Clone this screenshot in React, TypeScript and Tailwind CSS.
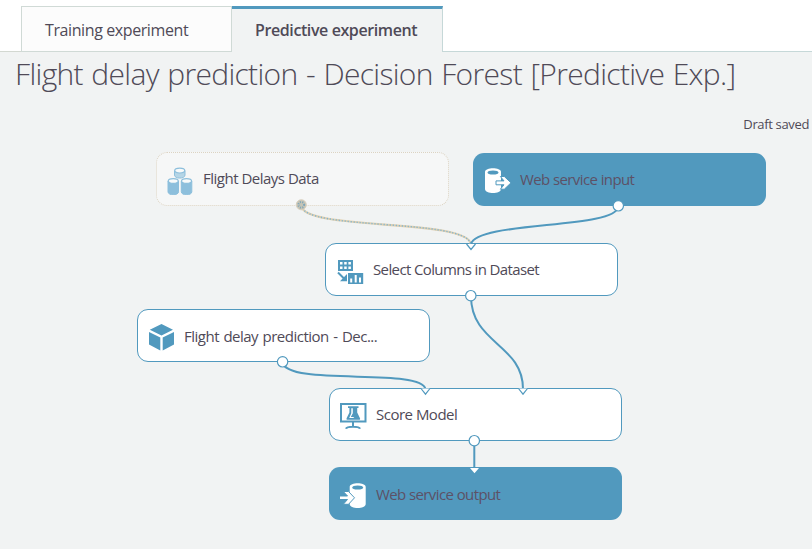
import type { ReactNode } from 'react';

const BLUE = '#5199be';

type NodeProps = {
  box: string;
  label: string;
  labelClass: string;
  icon: ReactNode;
};

function DatasetIcon() {
  const can = (x: number, y: number, h: number, body: string) => (
    <g key={`${x}-${y}`}>
      <path
        d={`M${x + 0.5} ${y + 3}v${h}c0 4 10.5 4 10.5 0v-${h}z`}
        fill={body}
        stroke="#8dbfdc"
      />
      <ellipse cx={x + 5.75} cy={y + 3} rx="5" ry="2.4" fill="#f8fafa" stroke="#8dbfdc" strokeWidth="1.2" />
    </g>
  );
  return (
    <svg className="h-[28px] w-[26px]" viewBox="0 0 26 28">
      {can(7, 0.6, 4.5, '#b5d5e6')}
      {can(0.5, 11, 10.8, '#8dbfdc')}
      {can(13.8, 11, 10.8, '#8dbfdc')}
    </svg>
  );
}

function InputIcon() {
  return (
    <svg className="h-[26px] w-[26px]" viewBox="0 0 26 26">
      <path d="M0 4v17c0 5.300 16 5.300 16 0V4c0-5-16-5-16 0z" fill="#fff" />
      <ellipse cx="8" cy="4.600" rx="5.400" ry="2" fill={BLUE} />
      <path d="M11 12.900h8l-3.600-4.400h3.900l6.700 6.300-6.700 6.400h-3.900l3.600-4.400H11z" fill="#fff" stroke={BLUE} />
    </svg>
  );
}

function OutputIcon() {
  return (
    <svg className="h-[26px] w-[26px]" viewBox="0 0 26 26">
      <path d="M9.700 4v17c0 5.300 16 5.300 16 0V4c0-5-16-5-16 0z" fill="#fff" />
      <ellipse cx="17.700" cy="4.600" rx="5.400" ry="2" fill={BLUE} />
      <path d="M-1 13h8.500L3.300 8.500h5.200l6 6.300-6 6.500H3.300l4.200-4.800H-1z" fill="#fff" stroke={BLUE} />
    </svg>
  );
}

function ColumnsIcon() {
  return (
    <svg className="h-[25px] w-[27px]" viewBox="0 0 27 25">
      <path d="M1 0h15v11H1z" fill={BLUE} />
      <path d="M3 2h2.500v2.500H3zM7.200 2h2.500v2.500H7.200zM11.400 2h2.500v2.500h-2.500zM3 6.500h2.500V9H3zM7.200 6.500h2.500V9H7.200zM11.400 6.500h2.500V9h-2.500z" fill="#fff" />
      <path d="M1 12.500l7 7" stroke={BLUE} strokeWidth="2" />
      <path d="M10 14v7.300H3z" fill={BLUE} />
      <path d="M11 13h15.200v11H11z" fill={BLUE} />
      <path d="M13.200 18.500h2v4h-2zM17.700 15h2v7.500h-2zM22 17.500h2v5h-2z" fill="#fff" />
    </svg>
  );
}

function CubeIcon() {
  return (
    <svg className="h-[27px] w-[25px]" viewBox="0 0 25 27">
      <path d="M12.500 0L24 5.700 12.500 11.500.8 5.700zM0 8l11.300 5.600V26.500L0 20.500zM25 8l-11.300 5.600V26.500L25 20.500z" fill={BLUE} />
    </svg>
  );
}

function ScoreIcon() {
  return (
    <svg className="h-[27px] w-[27px]" viewBox="0 0 27 27">
      <path d="M1 1h24.500v17.500H1z" fill="none" stroke={BLUE} strokeWidth="2" />
      <path d="M8 3.300h10.500v1.800h-1.300v4.400l2.800 5.700c.3 1-.1 1.500-1 1.500H7.600c-.9 0-1.300-.5-1-1.500l2.800-5.700V5.100H8z" fill={BLUE} />
      <path d="M11.300 5.300h1.500v4.900l-2 3.800h3.600l-1.200 1H9.200l2.100-4.700z" fill="#fff" />
      <path d="M13 19v5M6 25.800c.5-1.600 2-2 7-2s6.500.4 7 2" fill="none" stroke={BLUE} strokeWidth="2" />
    </svg>
  );
}

function GraphNode({ box, label, labelClass, icon }: NodeProps) {
  return (
    <div className={`absolute flex items-center rounded-[11px] ${box}`}>
      {icon}
      <span className={`whitespace-nowrap text-[15px] leading-5 ${labelClass}`}>{label}</span>
    </div>
  );
}

function Wires() {
  return (
    <svg className="absolute inset-0 h-full w-full" viewBox="0 140 812 409">
      <g fill="none" stroke={BLUE} strokeWidth="2">
        <path d="M301 206C306 231 465 218 471 244" stroke="#dfcfb0" strokeWidth="2.200" />
        <path d="M301 206C306 231 465 218 471 244" stroke="#7fb5d3" strokeDasharray="1.200 1.800" strokeWidth="1.400" />
        <path d="M618 207C616 229 477 221 471 244" />
        <path d="M471 296C471 344 523 344 523 389" />
        <path d="M282.500 362C286 387 421 367 425.500 389" />
        <path d="M474.300 441V468" />
      </g>
      <g fill="#fff" stroke={BLUE} strokeWidth="1.200">
        <path d="M466.500 244l4.500 5.500 4.500-5.500M421 388.500l4.500 5.700 4.500-5.700M518.500 388.500l4.500 5.700 4.500-5.700" />
        <circle cx="618.300" cy="205.800" r="5.200" />
        <circle cx="470.800" cy="295.700" r="5.200" />
        <circle cx="282.600" cy="361.800" r="5.200" />
        <circle cx="474.300" cy="440.700" r="5.200" />
      </g>
      <path d="M470 468h9l-4.500 5.200z" fill="#fff" />
      <circle cx="301.300" cy="204.800" r="5" fill="#c5c4b6" stroke="#d9cfbc" />
      <circle cx="301.300" cy="204.800" r="2.800" fill="none" stroke="#7ea6ba" strokeDasharray="1 1.300" strokeWidth="2" />
    </svg>
  );
}

export default function App() {
  return (
    <div className="flex h-[549px] w-[812px] flex-col overflow-hidden bg-[#f1f3f3] font-['Open_Sans','Noto_Sans',sans-serif] text-[#4f4a57]">
      <nav className="flex h-[52px] shrink-0 bg-white pt-[6px]">
        <div className="w-[21px] border-b border-[#d3d8d1]" />
        <div className="flex w-[211px] items-center border border-[#d0dad6] bg-[#fcfcfc] pt-px pl-[23px] text-base">
          <span className="whitespace-nowrap tracking-[-0.4px]">Training experiment</span>
        </div>
        <div className="flex w-[211px] items-center border-t-3 border-r border-t-[#5199be] border-r-[#c6d8d8] bg-[#f1f3f3] pb-[2px] pl-[23px] text-base font-semibold">
          <span className="whitespace-nowrap tracking-[-0.4px]">Predictive experiment</span>
        </div>
        <div className="flex-1 border-b border-[#c6d8d8]" />
      </nav>
      <h1 className="h-[60px] shrink-0 whitespace-nowrap pl-[15px] text-[30px] leading-[44px] font-light tracking-[-0.67px] [word-spacing:1.3px]">
        Flight delay prediction - Decision Forest [Predictive Exp.]
      </h1>
      <div className="flex h-7 shrink-0 justify-end pr-[3px] text-[13px] leading-[25px]">
        <span className="tracking-[-0.35px]">Draft saved</span>
      </div>
      <main className="relative flex-1">
        <GraphNode
          box="left-[156px] top-[12px] h-[54px] w-[293px] border border-dotted border-[#dcd3c2] bg-[#f6f7f7] pl-[10px]"
          icon={<div className="pt-[3px]"><DatasetIcon /></div>}
          label="Flight Delays Data"
          labelClass="ml-[10px] pb-[2px] tracking-[-0.5px]"
        />
        <GraphNode
          box="left-[473px] top-[12.500px] h-[53.500px] w-[293px] bg-[#5199be] pl-[12px]"
          icon={<div className="pt-1"><InputIcon /></div>}
          label="Web service input"
          labelClass="ml-[9px] text-[#5d5166] tracking-[-0.6px]"
        />
        <GraphNode
          box="left-[325px] top-[103px] h-[53px] w-[293px] border border-[#5199be] bg-white pl-[11px]"
          icon={<div className="pt-[5px]"><ColumnsIcon /></div>}
          label="Select Columns in Dataset"
          labelClass="ml-[9px] pb-[2px] tracking-[-0.62px]"
        />
        <GraphNode
          box="left-[137px] top-[169px] h-[53px] w-[293px] border border-[#5199be] bg-white pl-[11px]"
          icon={<div className="pt-[3px]"><CubeIcon /></div>}
          label="Flight delay prediction - Dec..."
          labelClass="ml-[10px] tracking-[-0.5px] [word-spacing:1px]"
        />
        <GraphNode
          box="left-[329px] top-[248px] h-[53px] w-[293px] border border-[#5199be] bg-white pl-[10px]"
          icon={<div className="pt-[3px]"><ScoreIcon /></div>}
          label="Score Model"
          labelClass="ml-[9px] pb-[2px] tracking-[-0.5px]"
        />
        <GraphNode
          box="left-[329px] top-[327px] h-[53px] w-[293px] bg-[#5199be] pl-[11px]"
          icon={<div className="pt-[4px]"><OutputIcon /></div>}
          label="Web service output"
          labelClass="ml-[10px] text-[#5d5166] tracking-[-0.6px]"
        />
        <Wires />
      </main>
    </div>
  );
}
